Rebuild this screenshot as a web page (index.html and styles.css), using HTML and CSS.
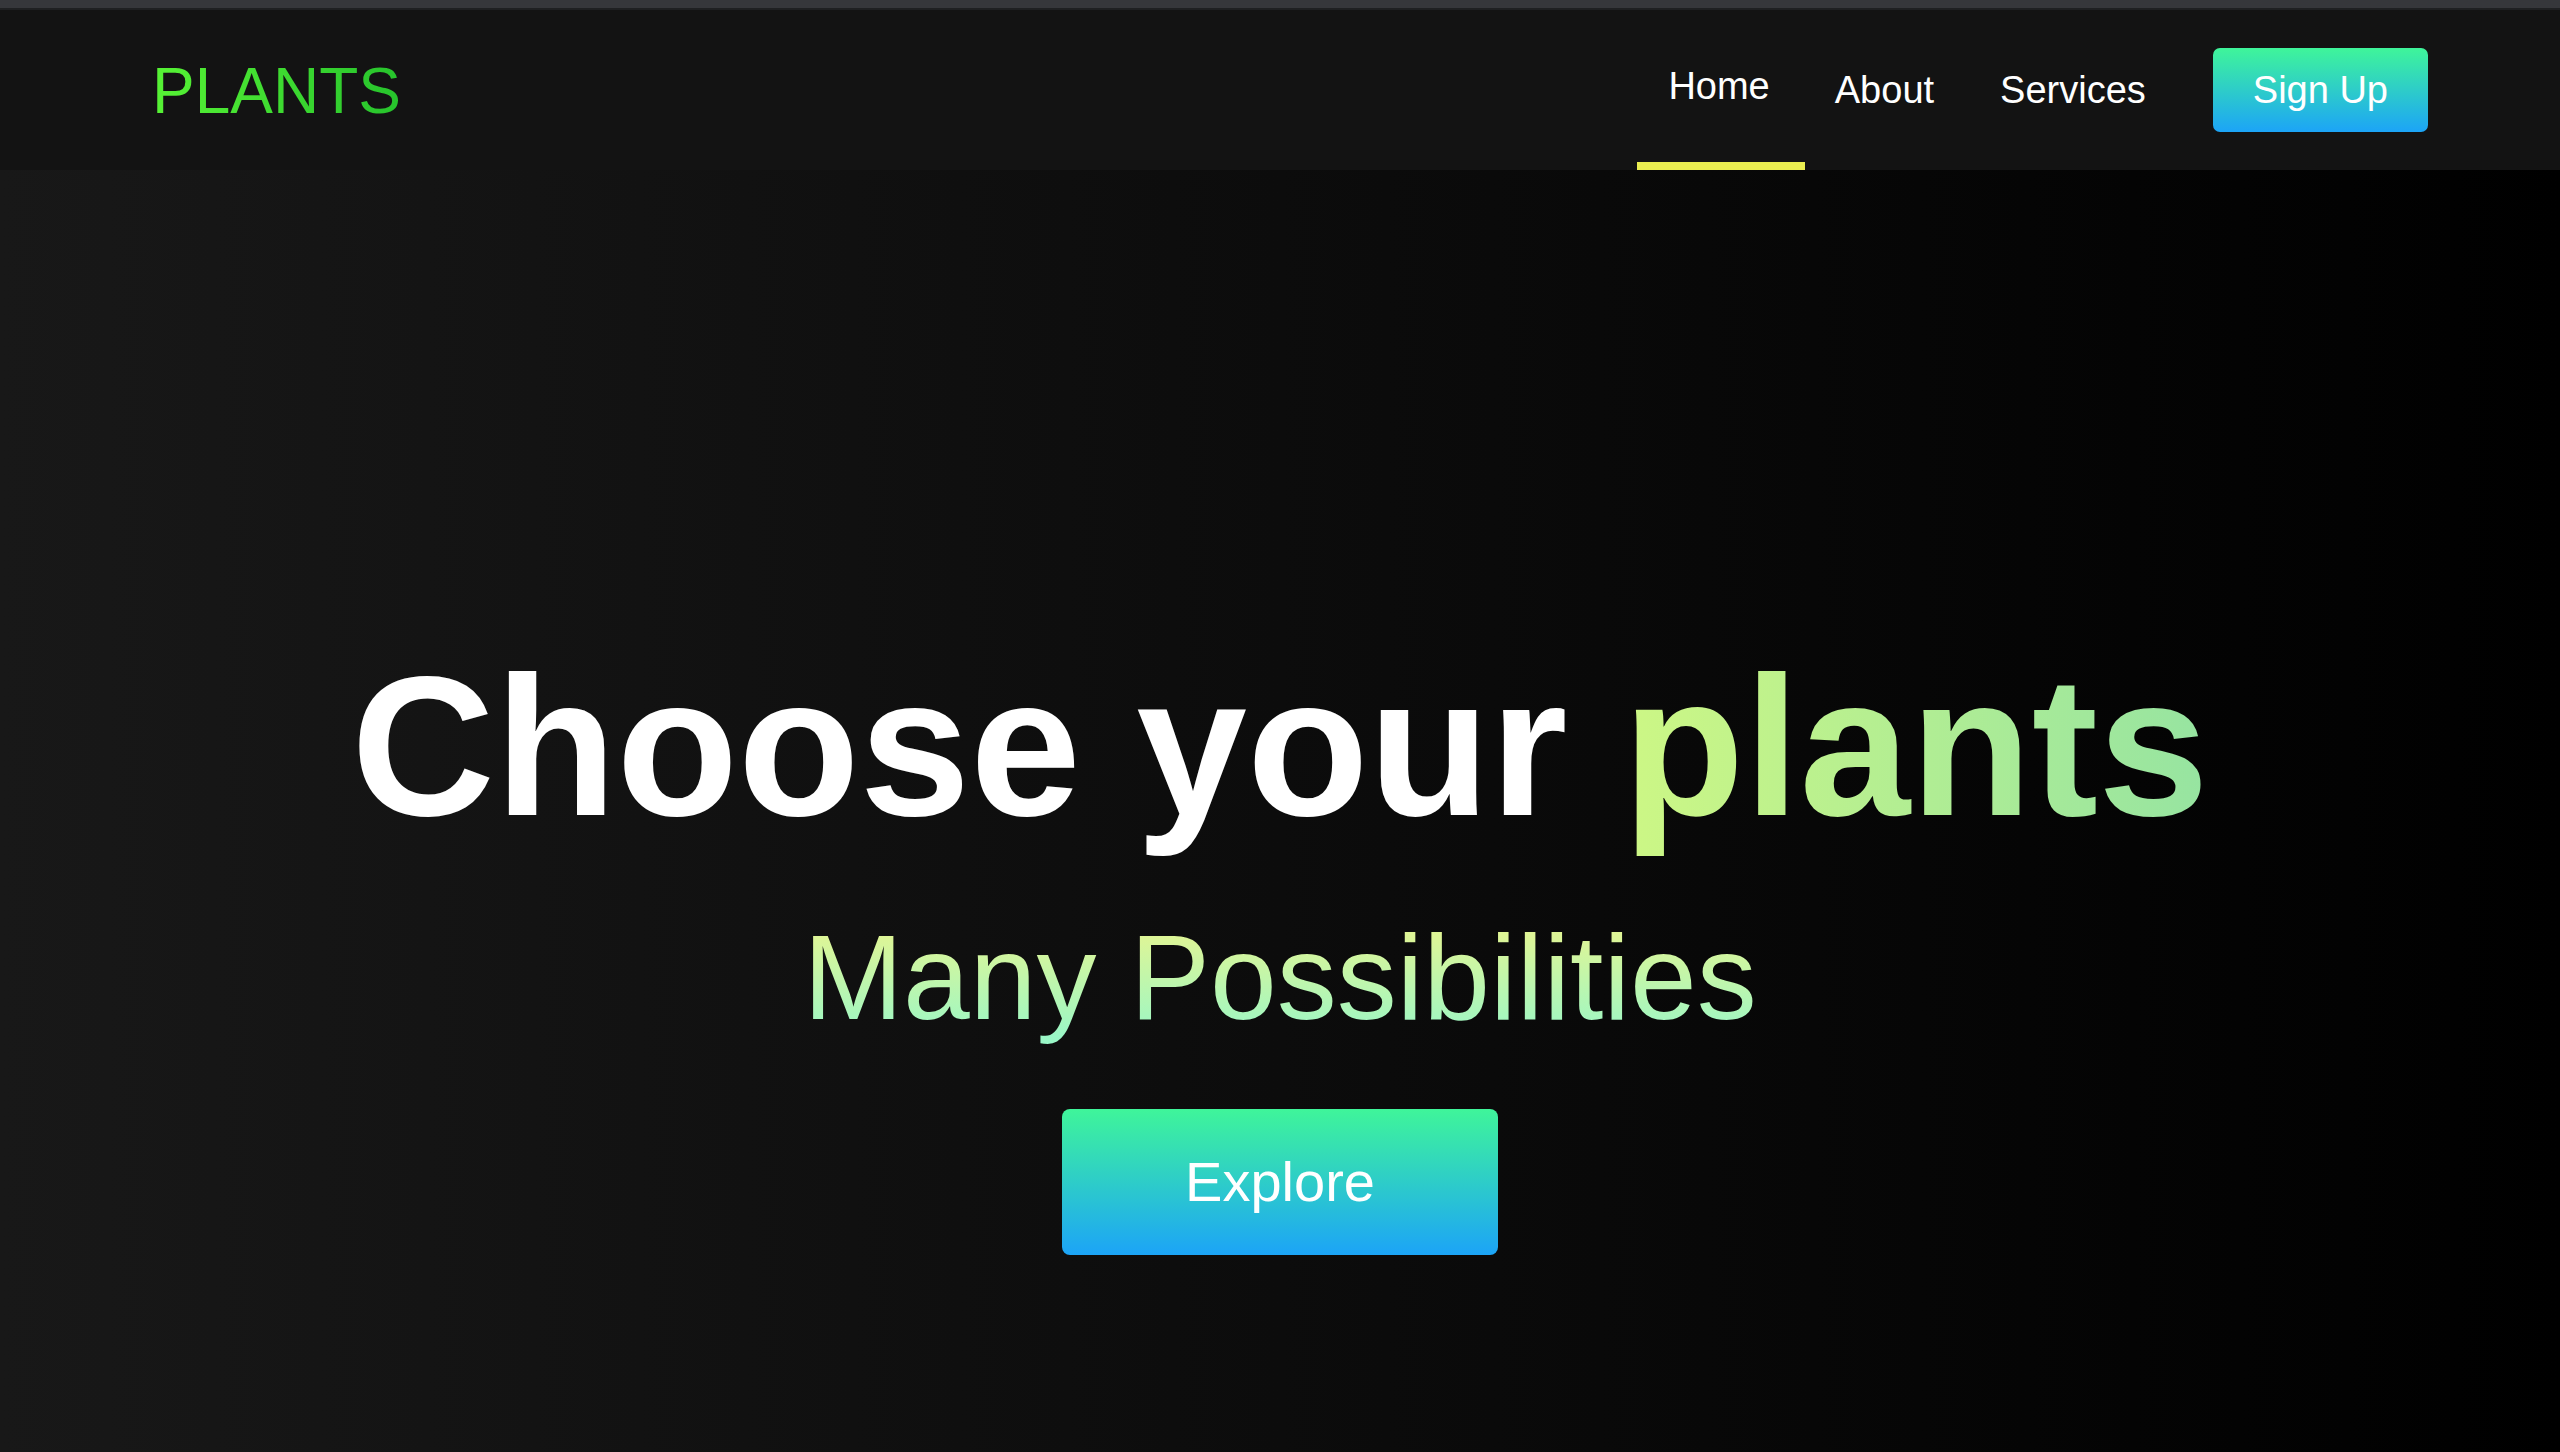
FILE: index.html
```html
<!DOCTYPE html>
<html lang="en">
<head>
<meta charset="utf-8">
<title>Plants</title>
<link rel="stylesheet" href="styles.css">
</head>
<body>
<div class="chrome"></div>
<header class="nav">
  <div class="logo">PLANTS</div>
  <nav class="menu">
    <a class="link active" href="#"><span>Home</span></a>
    <a class="link" href="#"><span>About</span></a>
    <a class="link" href="#"><span>Services</span></a>
    <a class="signup" href="#">Sign Up</a>
  </nav>
</header>
<main class="hero">
  <h1 class="title">Choose your <span class="grad">plants</span></h1>
  <h2 class="subtitle">Many Possibilities</h2>
  <a class="explore" href="#">Explore</a>
</main>
</body>
</html>
```

FILE: styles.css
```css
* { box-sizing: border-box; }
html, body { margin: 0; padding: 0; }
body {
  width: 2560px;
  height: 1452px;
  overflow: hidden;
  background: #000;
  font-family: "Liberation Sans", Arial, sans-serif;
  display: flex;
  flex-direction: column;
}
.chrome {
  height: 10px;
  background: #36373b;
  border-bottom: 2px solid #1f2022;
  flex: none;
}
.nav {
  height: 160px;
  flex: none;
  background: #131313;
  display: flex;
  align-items: center;
  justify-content: space-between;
  padding: 0 132px 0 152px;
}
.logo {
  font-size: 64px;
  line-height: 1;
  background: linear-gradient(to right, #57f335, #26c32c);
  -webkit-background-clip: text;
  background-clip: text;
  color: transparent;
  margin-top: 2px;
}
.menu {
  display: flex;
  align-items: center;
  height: 100%;
}
.link {
  position: relative;
  height: 100%;
  display: flex;
  align-items: center;
  padding: 0 33px;
  color: #fff;
  text-decoration: none;
  font-size: 38px;
}
.link span { display: block; line-height: 1; }
.link.active span { transform: translate(1px, -4px); }
.link.active::after {
  content: "";
  position: absolute;
  left: 3px;
  right: -3px;
  bottom: 0;
  height: 8px;
  background: #eaee50;
}
.signup {
  margin-left: 34px;
  height: 84px;
  padding: 0 40px;
  display: flex;
  align-items: center;
  border-radius: 7px;
  background: linear-gradient(to bottom, #3ff59a, #1ca4f7);
  color: #fff;
  text-decoration: none;
  font-size: 38px;
  line-height: 1;
}
.hero {
  flex: 1;
  background: linear-gradient(to right, #181818, #000);
  display: flex;
  flex-direction: column;
  align-items: center;
  padding-top: 476px;
}
.title {
  margin: 0;
  font-size: 199px;
  line-height: 200px;
  font-weight: 700;
  color: #fff;
  white-space: nowrap;
}
.grad {
  background: linear-gradient(to right, #cdf785, #96e4a1);
  -webkit-background-clip: text;
  background-clip: text;
  color: transparent;
}
.subtitle {
  margin: 71px 0 0;
  padding: 0 4px 28px;
  font-size: 120px;
  line-height: 120px;
  font-weight: 400;
  white-space: nowrap;
  background: linear-gradient(to bottom, #eaf58e, #9bf7c6 80%, #93f8cb);
  -webkit-background-clip: text;
  background-clip: text;
  color: transparent;
}
.explore {
  margin-top: 44px;
  width: 436px;
  height: 146px;
  display: flex;
  align-items: center;
  justify-content: center;
  border-radius: 8px;
  background: linear-gradient(to bottom, #3ff59a, #1ca4f7);
  color: #fff;
  text-decoration: none;
  font-size: 56px;
  line-height: 1;
}
```
